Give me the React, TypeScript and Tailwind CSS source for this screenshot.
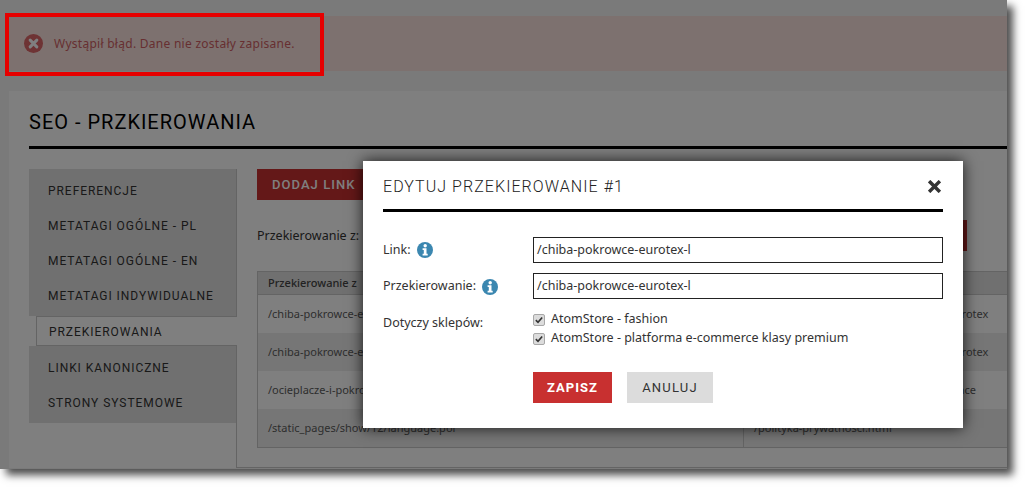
import React from "react";

const body = "font-['Noto_Sans','Liberation_Sans',sans-serif]";
const din = "font-['Roboto','Liberation_Sans',sans-serif]";

const nav = ["PREFERENCJE", "METATAGI OGÓLNE - PL", "METATAGI OGÓLNE - EN", "METATAGI INDYWIDUALNE"];
const nav2 = ["LINKI KANONICZNE", "STRONY SYSTEMOWE"];
const rows = [
  ["/chiba-pokrowce-eurotex-l", "/chiba-pokrowce-na-foteliki-dzieciece-eurotex", "bg-white"],
  ["/chiba-pokrowce-eurotex-xl", "/chiba-pokrowce-na-foteliki-dzieciece-eurotex", "bg-[#ececec]"],
  ["/ocieplacze-i-pokrowce", "/ocieplacze-i-pokrowce-na-wozki-spacerace", "bg-white"],
  ["/static_pages/show/12/language.pol", "/polityka-prywatnosci.html", "bg-[#ececec]"],
];

function Info() {
  return (
    <svg viewBox="0 0 16 16" className="w-4 h-4 shrink-0">
      <circle cx="8" cy="8" r="8" fill="#3b87b0" />
      <circle cx="8.2" cy="3.8" r="1.7" fill="#fff" />
      <path d="M5.6 6.3h3.9v5.4h1.2v1.8H5.6v-1.8h1.2V8.1H5.6z" fill="#fff" />
    </svg>
  );
}

function Check({ label }: { label: string }) {
  return (
    <div className="flex items-center gap-[6px] h-[19px]">
      <span className="w-3 h-3 rounded-[2px] bg-[#dcdcdc] border border-[#a8a8a8] flex items-center justify-center">
        <svg viewBox="0 0 12 12" className="w-[10px] h-[10px]">
          <path d="M2.2 6.2 4.8 8.8 9.8 3" fill="none" stroke="#333" strokeWidth="2" />
        </svg>
      </span>
      <span className="text-[12.5px] text-[#333]">{label}</span>
    </div>
  );
}

export default function App() {
  return (
    <div className={`relative w-[1027px] h-[489px] bg-white overflow-hidden ${body}`}>
      <div className="relative w-[1007px] h-[469px] bg-[#f5f5f5] overflow-hidden shadow-[6px_6px_8px_rgba(0,0,0,0.7)]">
        <div className="ml-[9px] mt-4 h-[55px] bg-[#fae3df] flex items-center pl-[15px] gap-[11px]">
          <svg viewBox="0 0 20 20" className="w-[19px] h-[19px]">
            <circle cx="10" cy="10" r="10" fill="#dd6668" />
            <path d="M6.5 6.5 13.5 13.5M13.5 6.5 6.5 13.5" stroke="#fff" strokeWidth="3.2" strokeLinecap="round" />
          </svg>
          <span className="text-[12px] text-[#cf5f63] tracking-[0.27px]">Wystąpił błąd. Dane nie zostały zapisane.</span>
        </div>

        <div className="ml-[9px] mt-5 h-[377px] bg-white pl-5 pt-[18px] flex flex-col">
          <div className={`${din} text-[20px] leading-[26px] tracking-[1px] text-black`}>SEO - PRZKIEROWANIA</div>
          <div className="h-[3px] bg-black mt-[11px]" />
          <div className="flex mt-5 flex-1 min-h-0">
            <div className="w-[208px] shrink-0 flex flex-col">
              <div className="bg-[#e0e0e0] border-r border-[#c8c8c8] pt-1 pb-[3px]">
                {nav.map((n) => (
                  <div key={n} className={`${din} h-[35px] pl-[19px] flex items-center text-[12px] tracking-[0.95px] text-[#333]`}>{n}</div>
                ))}
              </div>
              <div className={`${din} ml-[7px] h-[30px] bg-white border-l border-t border-b border-[#c8c8c8] pl-3 pt-[1px] flex items-center text-[12px] tracking-[0.95px] text-[#333]`}>PRZEKIEROWANIA</div>
              <div className="bg-[#e0e0e0] border-r border-[#c8c8c8] h-[77px] pt-1">
                {nav2.map((n) => (
                  <div key={n} className={`${din} h-[35px] pl-[19px] flex items-center text-[12px] tracking-[0.95px] text-[#333]`}>{n}</div>
                ))}
              </div>
              <div className="flex-1 border-r border-[#c8c8c8]" />
            </div>

            <div className="flex-1 min-w-0 pl-5 border-b border-[#c8c8c8]">
              <div className={`${din} w-[110px] h-[31px] bg-[#c83030] text-white text-[13px] font-medium tracking-[1.05px] flex items-center pl-[15px] pt-[1px]`}>DODAJ LINK</div>
              <div className="flex items-center justify-between mt-5 h-[31px] pr-10">
                <span className="text-[12.5px] text-[#333] pt-[2px]">Przekierowanie z:</span>
                <span className="w-[60px] h-[31px] bg-[#c83030]" />
              </div>
              <div className="mt-5 border-l border-t border-b border-[#c8c8c8]">
                <div className="flex h-[23px] bg-[#e0e0e0] border-b border-[#c8c8c8] text-[11px] font-medium text-[#444]">
                  <div className="w-[486px] pl-[10px] flex items-center">Przekierowanie z</div>
                  <div className="flex-1 pl-[10px] flex items-center">Przekierowanie na</div>
                </div>
                {rows.map(([a, b, bg]) => (
                  <div key={a} className={`flex h-[38px] text-[11px] text-[#5c5c5c] whitespace-nowrap ${bg}`}>
                    <div className="w-[486px] pl-[10px] flex items-center border-r border-[#c8c8c8]">{a}</div>
                    <div className="flex-1 pl-[10px] flex items-center">{b}</div>
                  </div>
                ))}
              </div>
            </div>
          </div>
        </div>

        <div className="absolute inset-0 bg-black/50" />
      </div>

      <div className="absolute left-[5px] top-[13px] w-[319px] h-[63px] border-4 border-[#e60000]" />

      <div className="absolute left-[363px] top-[161px] w-[600px] h-[267px] bg-white px-5 pt-[13px] shadow-[0_0_14px_rgba(0,0,0,0.8)]">
        <div className="flex items-center justify-between h-[26px]">
          <span className={`${din} text-[16px] font-light tracking-[1.05px] text-[#222]`}>EDYTUJ PRZEKIEROWANIE #1</span>
          <svg viewBox="0 0 13 13" className="w-[13px] h-[13px] mr-[2px] -mt-[2px]">
            <path d="M2.3 2.3 10.7 10.7M10.7 2.3 2.3 10.7" stroke="#333" strokeWidth="3.4" strokeLinecap="square" />
          </svg>
        </div>
        <div className="h-[3px] bg-black mt-[9px]" />

        <div className="flex items-center h-[26px] mt-[25px]">
          <div className="w-[150px] flex items-center gap-[6px] text-[12.5px] text-[#333]">Link: <Info /></div>
          <div className="flex-1 h-[26px] border border-[#222] pl-[3px] flex items-center text-[12.5px] text-[#333]">/chiba-pokrowce-eurotex-l</div>
        </div>
        <div className="flex items-center h-[26px] mt-[10px]">
          <div className="w-[150px] flex items-center gap-[6px] text-[12.5px] text-[#333] pt-[1px]">Przekierowanie: <Info /></div>
          <div className="flex-1 h-[26px] border border-[#222] pl-[3px] flex items-center text-[12.5px] text-[#333]">/chiba-pokrowce-eurotex-l</div>
        </div>
        <div className="flex mt-[11px]">
          <div className="w-[150px] text-[12.5px] text-[#333] pt-1">Dotyczy sklepów:</div>
          <div className="flex flex-col">
            <Check label="AtomStore - fashion" />
            <Check label="AtomStore - platforma e-commerce klasy premium" />
          </div>
        </div>
        <div className="flex ml-[150px] mt-6 gap-[15px]">
          <button className={`${din} w-[79px] h-[31px] bg-[#c83030] text-white text-[13px] font-bold tracking-[1px]`}>ZAPISZ</button>
          <button className={`${din} w-[86px] h-[31px] bg-[#dcdcdc] text-[#333] text-[13px] tracking-[1.2px]`}>ANULUJ</button>
        </div>
      </div>
    </div>
  );
}
